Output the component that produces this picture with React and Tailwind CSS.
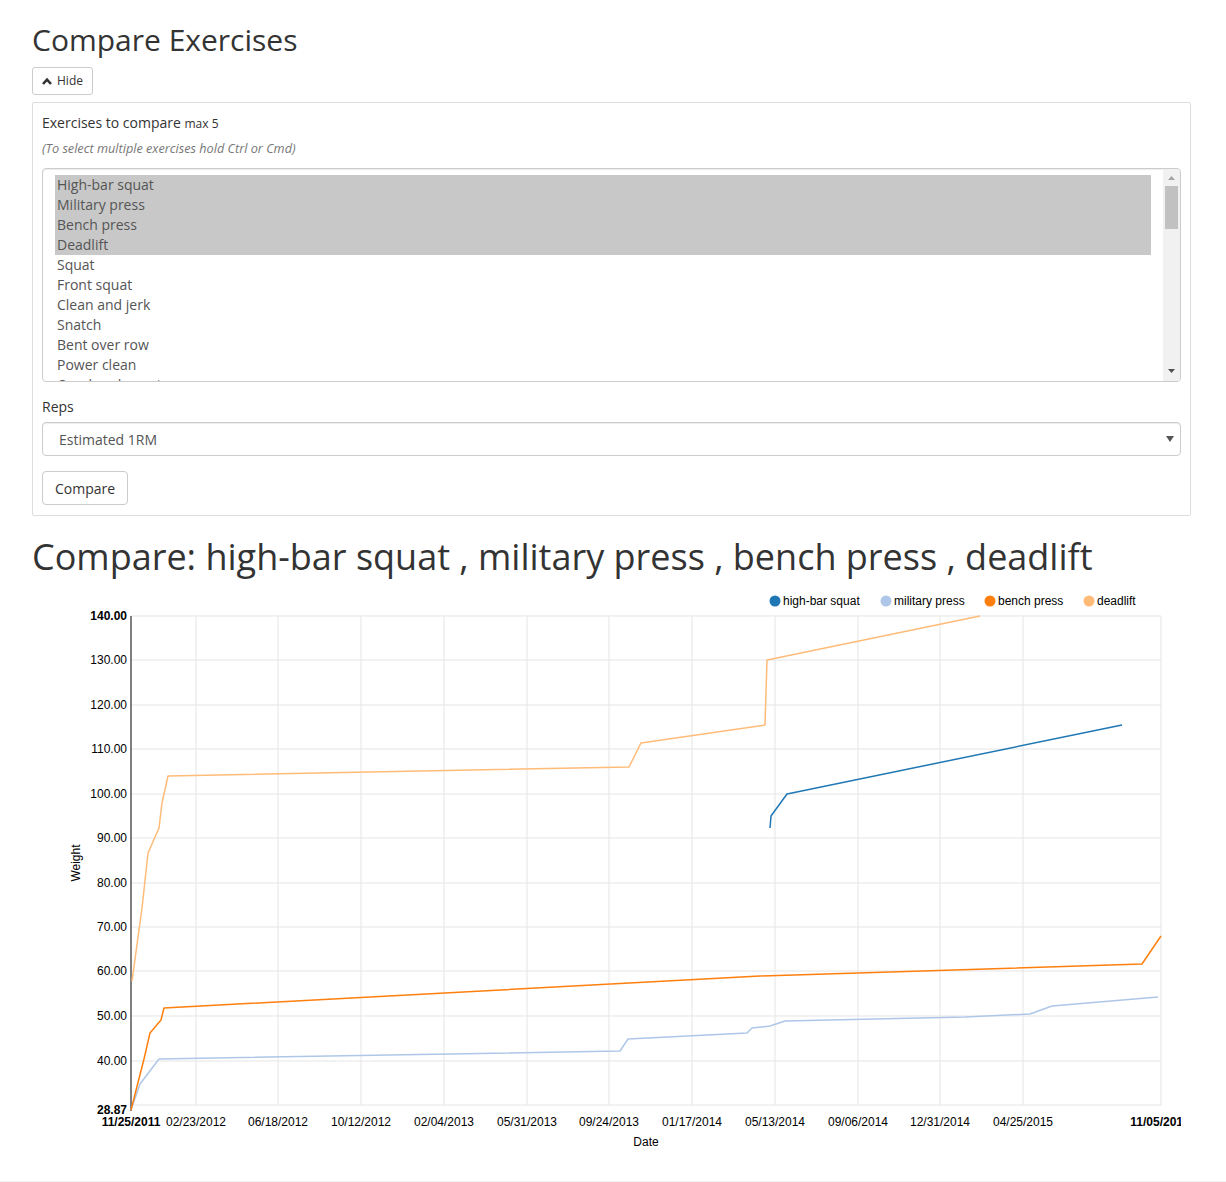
import React from "react";

const exercises = [
  { name: "High-bar squat", selected: true },
  { name: "Military press", selected: true },
  { name: "Bench press", selected: true },
  { name: "Deadlift", selected: true },
  { name: "Squat" },
  { name: "Front squat" },
  { name: "Clean and jerk" },
  { name: "Snatch" },
  { name: "Bent over row" },
  { name: "Power clean" },
  { name: "Overhead squat" },
];

// chart is drawn in page coordinates, shifted by the svg origin
const OX = 32;
const OY = 586;
const LEFT = 131;
const RIGHT = 1161;
const TOP = 615;
const BOTTOM = 1104;

const yTicks = [
  { label: "140.00", y: 615, bold: true },
  { label: "130.00", y: 659 },
  { label: "120.00", y: 704 },
  { label: "110.00", y: 748 },
  { label: "100.00", y: 793 },
  { label: "90.00", y: 837 },
  { label: "80.00", y: 882 },
  { label: "70.00", y: 926 },
  { label: "60.00", y: 970 },
  { label: "50.00", y: 1015 },
  { label: "40.00", y: 1060 },
];

const xTicks = [
  { label: "02/23/2012", x: 196 },
  { label: "06/18/2012", x: 278 },
  { label: "10/12/2012", x: 361 },
  { label: "02/04/2013", x: 444 },
  { label: "05/31/2013", x: 527 },
  { label: "09/24/2013", x: 609 },
  { label: "01/17/2014", x: 692 },
  { label: "05/13/2014", x: 775 },
  { label: "09/06/2014", x: 858 },
  { label: "12/31/2014", x: 940 },
  { label: "04/25/2015", x: 1023 },
];

const series = [
  {
    name: "high-bar squat",
    color: "#1f77b4",
    legendX: 775,
    points: [[770, 827], [771, 815], [787, 793], [1122, 724]],
  },
  {
    name: "military press",
    color: "#aec7e8",
    legendX: 886,
    points: [
      [131, 1109], [140, 1083], [159, 1058], [620, 1050], [628, 1038], [747, 1032],
      [752, 1027], [770, 1025], [785, 1020], [965, 1016], [1030, 1013], [1052, 1005], [1158, 996],
    ],
  },
  {
    name: "bench press",
    color: "#ff7f0e",
    legendX: 990,
    points: [
      [131, 1109], [144, 1058], [150, 1032], [161, 1019], [164, 1007], [760, 975],
      [1142, 963], [1161, 935],
    ],
  },
  {
    name: "deadlift",
    color: "#ffbb78",
    legendX: 1089,
    points: [
      [132, 980], [142, 907], [148, 852], [159, 827], [162, 802], [168, 775], [629, 766],
      [641, 742], [765, 724], [767, 659], [980, 615],
    ],
  },
];

function ChevronUp() {
  return (
    <svg width="10" height="8" viewBox="0 0 10 8" className="inline-block">
      <polyline points="1,7 5,2.6 9,7" fill="none" stroke="#333" strokeWidth="2.6" />
    </svg>
  );
}

function ExerciseList() {
  return (
    <div className="flex h-[214px] rounded-[4px] border border-[#ccc] bg-white shadow-[inset_0_1px_1px_rgba(0,0,0,0.075)] overflow-hidden">
      <div className="flex-1 overflow-hidden pt-[6px] px-[12px]">
        {exercises.map((ex) => (
          <div
            key={ex.name}
            className={`h-[20px] px-[2px] text-[14px] leading-[20px] text-[#555] ${ex.selected ? "bg-[#c8c8c8]" : ""}`}
          >
            {ex.name}
          </div>
        ))}
      </div>
      <div className="relative w-[17px] bg-[#f1f1f1]">
        <svg width="17" height="212" className="absolute inset-0">
          <polygon points="5,11 12,11 8.5,7" fill="#a3a3a3" />
          <rect x="2" y="17" width="13" height="43" fill="#c1c1c1" />
          <polygon points="5,200 12,200 8.5,204" fill="#505050" />
        </svg>
      </div>
    </div>
  );
}

function Chart() {
  const font = { fontFamily: '"Liberation Sans", Arial, sans-serif' };
  return (
    <svg width="1149" height="575" className="mt-[10px]" style={font}>
      <g transform={`translate(${-OX},${-OY})`}>
        {/* grid */}
        {xTicks.map((t) => (
          <line key={t.label} x1={t.x} x2={t.x} y1={TOP} y2={BOTTOM} stroke="#e5e5e5" strokeWidth="1" />
        ))}
        {yTicks.map((t) => (
          <line key={t.label} x1={LEFT} x2={RIGHT} y1={t.y} y2={t.y} stroke="#e5e5e5" strokeWidth="1" />
        ))}
        <line x1={LEFT} x2={RIGHT} y1={BOTTOM} y2={BOTTOM} stroke="#e5e5e5" strokeWidth="1" />
        <line x1={RIGHT} x2={RIGHT} y1={TOP} y2={BOTTOM} stroke="#e5e5e5" strokeWidth="1" />

        {/* y axis */}
        <line x1={LEFT} x2={LEFT} y1={TOP} y2={1110} stroke="#000" strokeWidth="1" />
        {yTicks.map((t) => (
          <text
            key={t.label}
            x={127}
            y={t.y + 4}
            textAnchor="end"
            fontSize="12"
            fontWeight={t.bold ? "bold" : "normal"}
            fill="#000"
          >
            {t.label}
          </text>
        ))}
        <text x={127} y={1113} textAnchor="end" fontSize="12" fontWeight="bold" fill="#000">
          28.87
        </text>
        <text
          x={77}
          y={862}
          textAnchor="middle"
          fontSize="12"
          fill="#000"
          transform="rotate(-90 77 862)"
          dominantBaseline="middle"
        >
          Weight
        </text>

        {/* x axis */}
        {xTicks.map((t) => (
          <text key={t.label} x={t.x} y={1125} textAnchor="middle" fontSize="12" fill="#000">
            {t.label}
          </text>
        ))}
        <text x={131} y={1125} textAnchor="middle" fontSize="12" fontWeight="bold" fill="#000">
          11/25/2011
        </text>
        <text x={1160} y={1125} textAnchor="middle" fontSize="12" fontWeight="bold" fill="#000">
          11/05/2015
        </text>
        <text x={646} y={1145} textAnchor="middle" fontSize="12" fill="#000">
          Date
        </text>

        {/* lines */}
        {series.map((s) => (
          <polyline
            key={s.name}
            points={s.points.map((p) => p.join(",")).join(" ")}
            fill="none"
            stroke={s.color}
            strokeWidth="1.5"
            strokeLinejoin="round"
          />
        ))}

        {/* legend */}
        {series.map((s) => (
          <g key={s.name}>
            <circle cx={s.legendX} cy={600} r={5.5} fill={s.color} />
            <text x={s.legendX + 8} y={604} fontSize="12" fill="#000">
              {s.name}
            </text>
          </g>
        ))}
      </g>
    </svg>
  );
}

export default function App() {
  return (
    <div className="bg-white text-[#333]" style={{ fontFamily: '"Open Sans", "Noto Sans", sans-serif' }}>
      <div className="px-[32px] pb-[19px]">
        <h2 className="pt-[23px] mb-[11px] text-[30px] leading-[33px] font-normal">Compare Exercises</h2>
        <button className="flex items-center gap-[5px] h-[28px] px-[9px] rounded-[3px] border border-[#ccc] bg-white text-[12px] text-[#333]">
          <ChevronUp />
          Hide
        </button>

        <div className="mt-[7px] border border-[#ddd] rounded-[2px] px-[9px] pt-[10px] pb-[10px] w-[1159px]">
          <div className="text-[14px] leading-[20px] font-medium text-[#333]">
            Exercises to compare <span className="text-[12px] font-normal">max 5</span>
          </div>
          <div className="mt-[4px] text-[12.7px] leading-[20px] italic text-[#777]">
            (To select multiple exercises hold Ctrl or Cmd)
          </div>
          <div className="mt-[10px]">
            <ExerciseList />
          </div>

          <div className="mt-[15px] text-[14px] leading-[20px] font-medium text-[#333]">Reps</div>
          <div className="mt-[5px] relative flex items-center h-[34px] rounded-[4px] border border-[#ccc] bg-white px-[16px] text-[14px] text-[#555] shadow-[inset_0_1px_1px_rgba(0,0,0,0.075)]">
            Estimated 1RM
            <svg width="8" height="6" viewBox="0 0 8 6" className="absolute right-[6px] top-[13px]">
              <polygon points="0,0 8,0 4,6" fill="#555" />
            </svg>
          </div>

          <button className="mt-[15px] h-[34px] px-[12px] rounded-[4px] border border-[#ccc] bg-white text-[14px] text-[#333]">
            Compare
          </button>
        </div>

        <h1 className="mt-[21px] text-[36px] leading-[40px] font-normal">
          Compare: high-bar squat , military press , bench press , deadlift
        </h1>
        <Chart />
      </div>
      <div className="border-t border-[#eee] h-[2px]" />
    </div>
  );
}
